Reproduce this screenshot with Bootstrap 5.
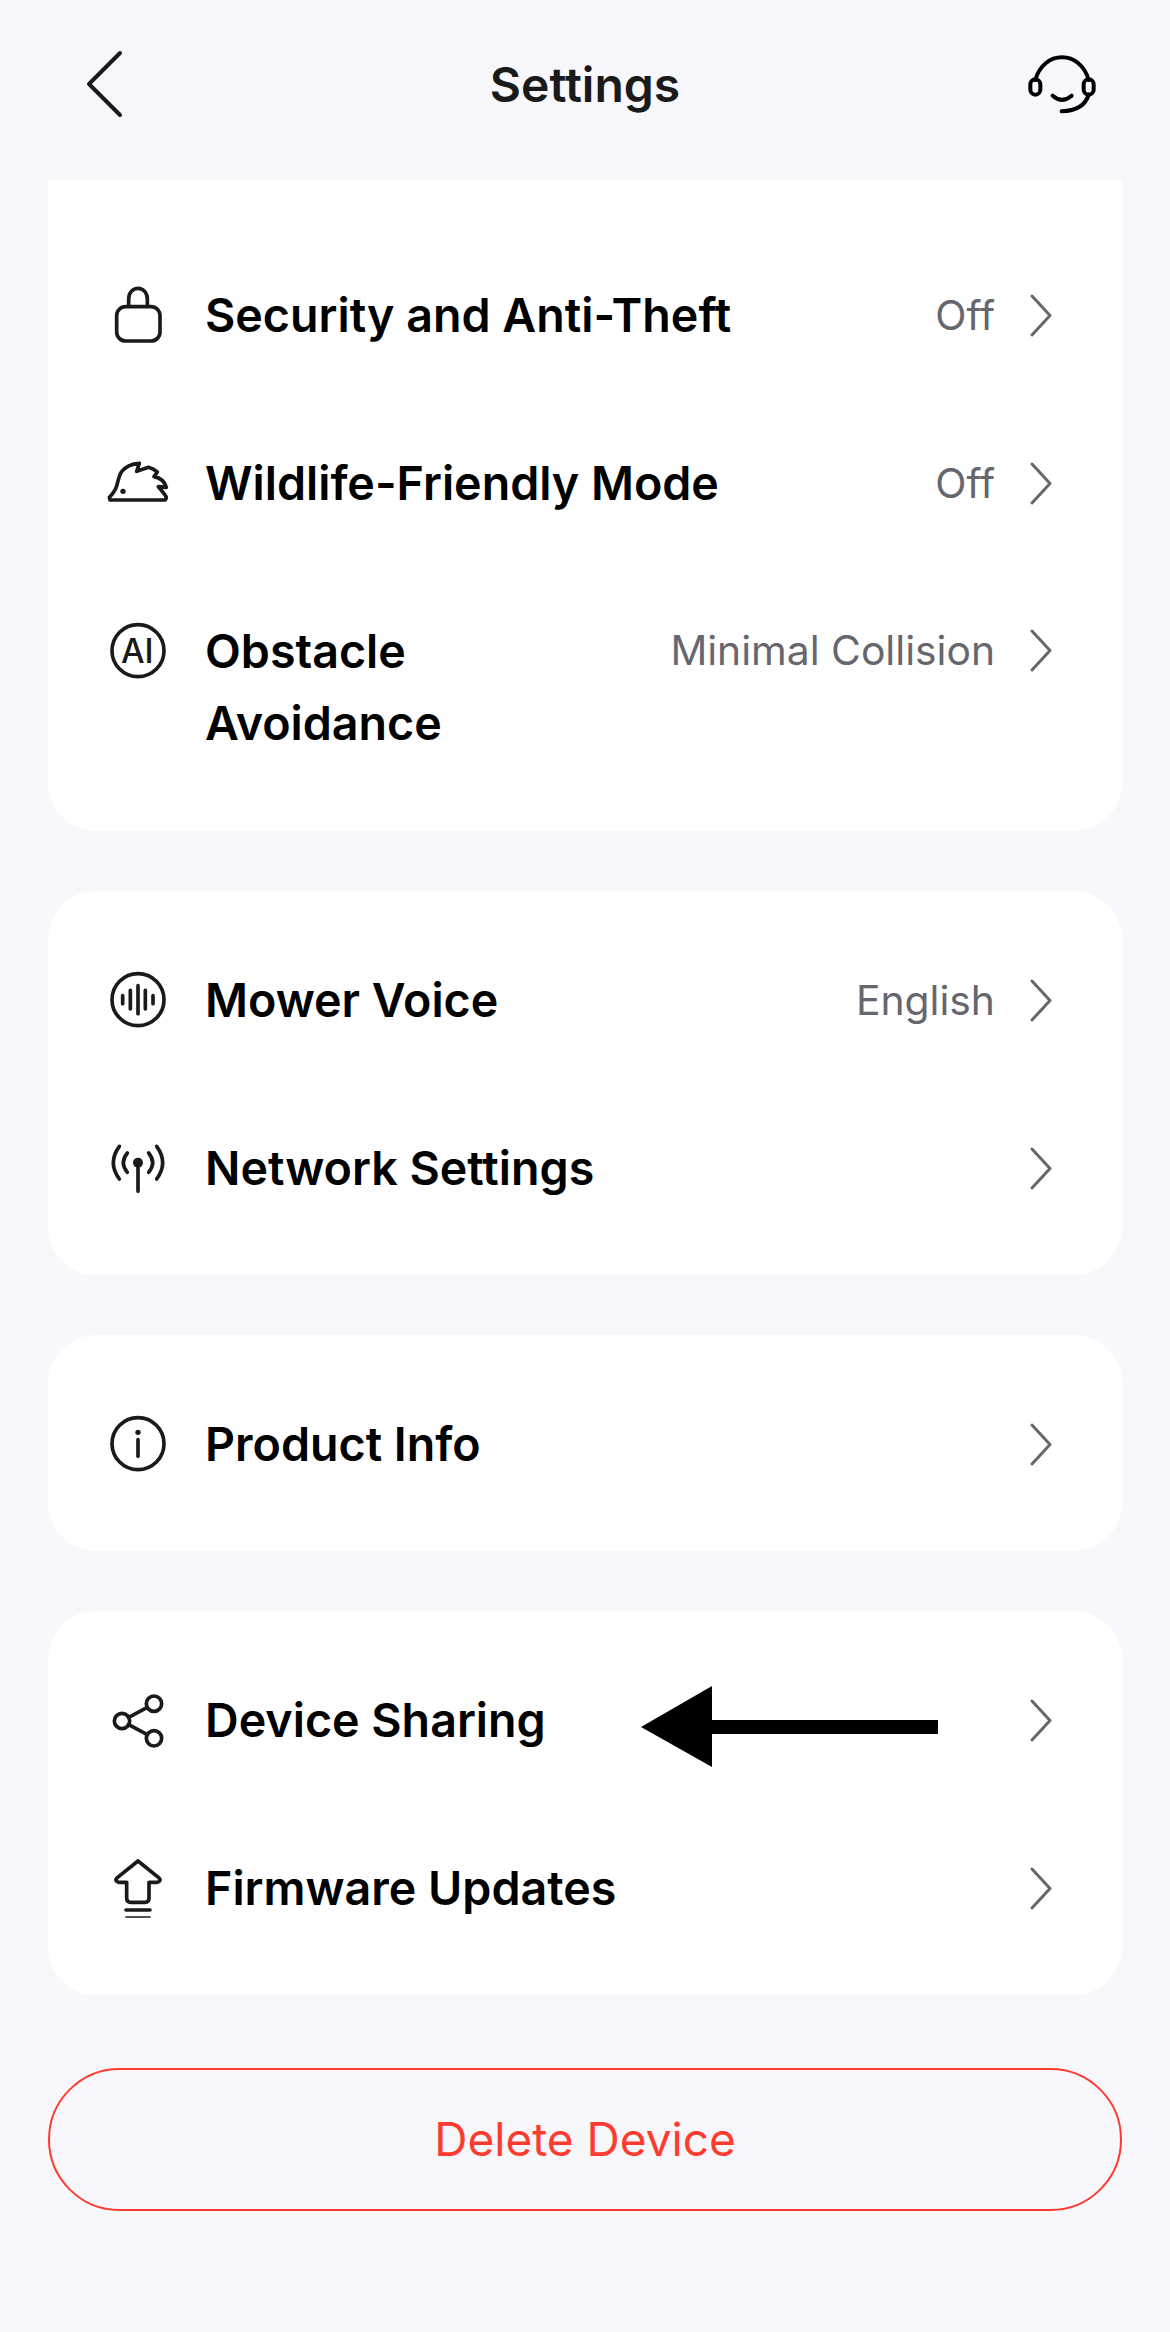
<!DOCTYPE html>
<html lang="en">
<head>
    <meta charset="UTF-8">
    <title>Settings</title>
    <meta name="viewport" content="width=device-width, initial-scale=1">
    <link href="https://cdn.jsdelivr.net/npm/bootstrap@5.3.0/dist/css/bootstrap.min.css" rel="stylesheet">
    <style>
        body {
            background: #f7f7fc;
            font-family: Inter, "Liberation Sans", sans-serif;
            color: #000;
        }

        .top-bar {
            height: 170px;
            margin-bottom: 10px;
        }

        .top-bar h1 {
            font-size: 48px;
            font-weight: 600;
            color: #1a1a1a;
            margin: 0;
        }

        .bar-side { width: 170px; }
        .bar-side.left-side { padding-left: 80px; }
        .bar-side.right-side { padding-right: 70px; text-align: right; }

        .back-icon { display: block; width: 50px; height: 80px; }
        .help-icon { width: 75px; height: 75px; display: inline-block; }

        .page-body { padding: 0 48px; }

        .set-card {
            border: 0;
            border-radius: 48px;
            margin-bottom: 60px;
            padding: 25px 0 23px;
        }

        .set-card.first-card {
            border-radius: 0 0 48px 48px;
            padding: 51px 0 24px;
        }

        .set-row {
            position: relative;
            padding: 48px 70px 48px 54px;
            line-height: 71px;
        }

        .row-icon {
            width: 72px;
            height: 72px;
            margin-right: 31px;
            flex: none;
        }

        .row-icon * { fill: none; stroke: #1a1a1a; stroke-width: 11; stroke-linecap: round; stroke-linejoin: round; }
        .row-icon .solid { fill: #1a1a1a; stroke: none; }
        .row-icon text { fill: #1a1a1a; stroke: none; font-family: Inter, sans-serif; font-size: 100px; font-weight: 500; }

        .row-title {
            font-size: 46.6px;
            font-weight: 600;
            line-height: 72px;
            max-width: 330px;
            white-space: normal;
        }

        .row-title.wide { max-width: none; white-space: nowrap; }

        .row-value {
            font-size: 40.8px;
            color: #66666e;
            margin-left: auto;
            margin-right: 35px;
            white-space: nowrap;
        }

        .row-arrow {
            width: 22px;
            height: 71px;
            flex: none;
        }

        .row-end { margin-left: auto; }

        .delete-btn {
            display: block;
            width: 100%;
            height: 143px;
            margin-top: 73px;
            border: 2px solid #ff3b30;
            border-radius: 72px;
            background: transparent;
            color: #ff3b30;
            font-size: 46px;
        }

        .delete-btn:hover { background: transparent; color: #ff3b30; border-color: #ff3b30; }

        .note-arrow {
            position: absolute;
            left: 593px;
            top: 50px;
            width: 297px;
            height: 81px;
        }
    </style>
</head>
<body>
<header class="top-bar d-flex align-items-center">
    <div class="bar-side left-side">
        <svg class="back-icon" viewBox="0 0 50 80"><path d="M40 8 L9 39 L40 70" fill="none" stroke="#1a1a1a" stroke-width="4" stroke-linecap="round" stroke-linejoin="round"/></svg>
    </div>
    <h1 class="flex-grow-1 text-center">Settings</h1>
    <div class="bar-side right-side">
        <svg class="help-icon" viewBox="135 52 225 225" fill="none" stroke="#000" stroke-width="12" stroke-linecap="round" stroke-linejoin="round">
            <path d="M166 148 C178 105 210 80 246 80 C282 80 314 105 326 148"/>
            <rect x="151" y="146" width="30" height="46" rx="15"/>
            <rect x="311" y="146" width="30" height="46" rx="15"/>
            <path d="M218 195 Q246 220 275 195"/>
            <path d="M326 192 Q312 240 245 242"/>
        </svg>
    </div>
</header>

<main class="page-body">
    <div class="card set-card first-card">
        <div class="set-row d-flex align-items-center">
            <svg class="row-icon" viewBox="36 27 216 216"><rect x="80" y="110" width="130" height="103" rx="27"/><path d="M116 108 V86 a28 31 0 0 1 56 0 V108"/></svg>
            <span class="row-title wide">Security and Anti-Theft</span>
            <span class="row-value">Off</span>
            <svg class="row-arrow" viewBox="0 0 22 71"><path d="M2 16 L20 35.5 L2 55" fill="none" stroke="#66666e" stroke-width="3" stroke-linecap="round" stroke-linejoin="round"/></svg>
        </div>
        <div class="set-row d-flex align-items-center">
            <svg class="row-icon" viewBox="36 51 216 216"><path d="M60 210 H225 Q232 204 226 196 Q216 182 205 170 L229 172 Q222 146 192 140 L202 126 Q190 116 176 112 L140 124 L148 100 Q112 102 94 126 C84 142 84 162 76 178 Q68 192 58 202 Z"/><circle class="solid" cx="99" cy="184" r="8"/></svg>
            <span class="row-title wide">Wildlife-Friendly Mode</span>
            <span class="row-value">Off</span>
            <svg class="row-arrow" viewBox="0 0 22 71"><path d="M2 16 L20 35.5 L2 55" fill="none" stroke="#66666e" stroke-width="3" stroke-linecap="round" stroke-linejoin="round"/></svg>
        </div>
        <div class="set-row d-flex align-items-start">
            <svg class="row-icon" viewBox="36 45 216 216"><circle cx="144" cy="152" r="78"/><text x="142" y="188" text-anchor="middle">AI</text></svg>
            <span class="row-title">Obstacle Avoidance</span>
            <span class="row-value">Minimal Collision</span>
            <svg class="row-arrow" viewBox="0 0 22 71"><path d="M2 16 L20 35.5 L2 55" fill="none" stroke="#66666e" stroke-width="3" stroke-linecap="round" stroke-linejoin="round"/></svg>
        </div>
    </div>

    <div class="card set-card">
        <div class="set-row d-flex align-items-center">
            <svg class="row-icon" viewBox="36 69 216 216"><circle cx="144" cy="176" r="78"/><path d="M98 164 V188 M121 148 V204 M144 134 V218 M166 148 V204 M189 164 V188"/></svg>
            <span class="row-title wide">Mower Voice</span>
            <span class="row-value">English</span>
            <svg class="row-arrow" viewBox="0 0 22 71"><path d="M2 16 L20 35.5 L2 55" fill="none" stroke="#66666e" stroke-width="3" stroke-linecap="round" stroke-linejoin="round"/></svg>
        </div>
        <div class="set-row d-flex align-items-center">
            <svg class="row-icon" viewBox="36 63 216 216"><path d="M88 106 Q52 155 88 204 M200 106 Q236 155 200 204 M112 126 Q88 155 112 184 M176 126 Q200 155 176 184 M144 156 V241"/><circle class="solid" cx="144" cy="155" r="15"/></svg>
            <span class="row-title wide">Network Settings</span>
            <svg class="row-arrow row-end" viewBox="0 0 22 71"><path d="M2 16 L20 35.5 L2 55" fill="none" stroke="#66666e" stroke-width="3" stroke-linecap="round" stroke-linejoin="round"/></svg>
        </div>
    </div>

    <div class="card set-card">
        <div class="set-row d-flex align-items-center">
            <svg class="row-icon" viewBox="36 51 216 216"><circle cx="144" cy="158" r="78"/><circle class="solid" cx="144" cy="124" r="8"/><path d="M144 146 V196"/></svg>
            <span class="row-title wide">Product Info</span>
            <svg class="row-arrow row-end" viewBox="0 0 22 71"><path d="M2 16 L20 35.5 L2 55" fill="none" stroke="#66666e" stroke-width="3" stroke-linecap="round" stroke-linejoin="round"/></svg>
        </div>
    </div>

    <div class="card set-card mb-0">
        <div class="set-row d-flex align-items-center">
            <svg class="row-icon" viewBox="36 66 216 216"><circle cx="192" cy="125" r="23"/><circle cx="96" cy="177" r="23"/><circle cx="192" cy="229" r="23"/><path d="M116 166 L172 136 M116 188 L172 218"/></svg>
            <span class="row-title wide">Device Sharing</span>
            <svg class="note-arrow" viewBox="0 0 297 81"><path d="M0 41 L71 0 V34 H297 V48 H71 V81 Z" fill="#000"/></svg>
            <svg class="row-arrow row-end" viewBox="0 0 22 71"><path d="M2 16 L20 35.5 L2 55" fill="none" stroke="#66666e" stroke-width="3" stroke-linecap="round" stroke-linejoin="round"/></svg>
        </div>
        <div class="set-row d-flex align-items-center">
            <svg class="row-icon" viewBox="36 573 216 216"><path d="M144 600 L82 650 Q72 660 86 664 H110 V712 Q110 724 122 724 H165 Q177 724 177 712 V664 H202 Q216 660 206 650 Z"/><path d="M108 747 H180" stroke-linecap="butt"/><path d="M108 768 H180" style="stroke-width:5"/></svg>
            <span class="row-title wide">Firmware Updates</span>
            <svg class="row-arrow row-end" viewBox="0 0 22 71"><path d="M2 16 L20 35.5 L2 55" fill="none" stroke="#66666e" stroke-width="3" stroke-linecap="round" stroke-linejoin="round"/></svg>
        </div>
    </div>

    <button type="button" class="btn delete-btn">Delete Device</button>
</main>
<script src="https://cdn.jsdelivr.net/npm/bootstrap@5.3.0/dist/js/bootstrap.bundle.min.js"></script>
</body>
</html>
